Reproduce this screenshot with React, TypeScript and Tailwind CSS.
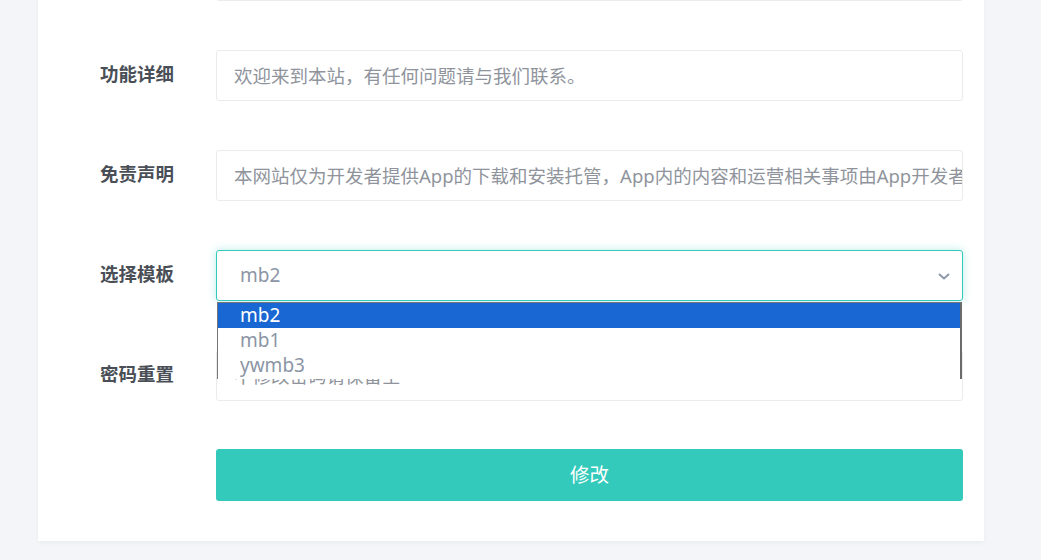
import React from 'react';

const font = { fontFamily: '"Noto Sans", "Noto Sans CJK SC", sans-serif' };

function Row({ label, children }: { label?: string; children: React.ReactNode }) {
  return (
    <div className="flex">
      <div className="w-[116px] h-[51px] flex items-center pb-[3px] text-[18.5px] font-bold text-[#4a4f57]">
        {label}
      </div>
      <div className="relative w-[747px]">{children}</div>
    </div>
  );
}

function Field({ text }: { text: string }) {
  return (
    <div className="h-[51px] border border-[#ebebeb] rounded-[3px] bg-white px-[17px] flex items-center text-[18.5px] text-[#8f949c] whitespace-nowrap overflow-hidden">
      {text}
    </div>
  );
}

export default function App() {
  const options = ['mb2', 'mb1', 'ywmb3'];
  return (
    <div className="h-[560px] bg-[#f4f5f9] overflow-hidden" style={font}>
      <div className="ml-[38px] w-[946px] mt-[-50px] bg-white shadow-[0_2px_4px_rgba(0,0,0,0.04)] pl-[62px] pb-[40px] flex flex-col gap-[49px]">
        {/* 上一行（被裁切） */}
        <Row>
          <Field text="" />
        </Row>

        <Row label="功能详细">
          <Field text="欢迎来到本站，有任何问题请与我们联系。" />
        </Row>

        <Row label="免责声明">
          <Field text="本网站仅为开发者提供App的下载和安装托管，App内的内容和运营相关事项由App开发者负责，与本网站无关。" />
        </Row>

        <Row label="选择模板">
          <div className="h-[51px] border border-[#33cabb] rounded-[3px] bg-white pl-[23px] pr-[10px] flex items-center justify-between text-[19px] text-[#8b95a5] shadow-[0_0_8px_rgba(51,202,187,0.35)]">
            <span>mb2</span>
            <svg width="14" height="10" viewBox="0 0 14 10" className="mr-[1px]">
              <path d="M2 3 L7 7.5 L12 3" fill="none" stroke="#8b95a5" strokeWidth="1.8" />
            </svg>
          </div>
          {/* 下拉列表 */}
          <div className="absolute left-[1px] right-[1px] top-[52px] z-10 bg-white border-t border-l border-[#767676] border-r-2 border-r-[#6b6b6b] h-[77px] overflow-hidden">
            {options.map((o, i) => (
              <div
                key={o}
                className={
                  'h-[25px] pl-[22px] flex items-center text-[19px] leading-none ' +
                  (i === 0 ? 'bg-[#1967d2] text-white' : 'text-[#8b95a5]')
                }
              >
                {o}
              </div>
            ))}
          </div>
        </Row>

        <Row label="密码重置">
          <Field text="不修改密码请保留空" />
        </Row>

        <div className="flex -mt-[1px]">
          <div className="w-[116px]" />
          <button className="w-[747px] h-[52px] rounded-[3px] bg-[#33cabb] text-white text-[19.5px]">
            修改
          </button>
        </div>
      </div>
    </div>
  );
}
